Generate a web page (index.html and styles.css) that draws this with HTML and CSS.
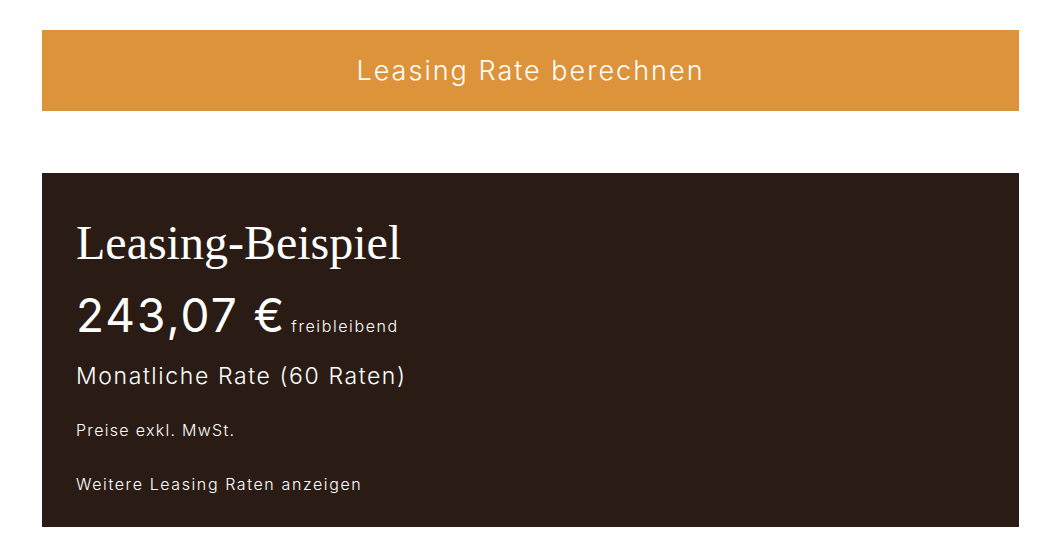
FILE: index.html
```html
<!DOCTYPE html>
<html lang="de">

<head>
    <meta charset="UTF-8">
    <meta name="viewport" content="width=device-width, initial-scale=1.0">
    <title>Leasing Rate</title>
    <link rel="stylesheet" href="styles.css">
</head>

<body>
    <div class="wrapper">
        <button class="btn">Leasing Rate berechnen</button>

        <div class="leasingBox">
            <h2 class="title">Leasing-Beispiel</h2>
            <div class="price">243,07 €<span class="note">freibleibend</span></div>
            <div class="rate">Monatliche Rate (60 Raten)</div>
            <p class="small">Preise exkl. MwSt.</p>
            <a class="small link" href="#">Weitere Leasing Raten anzeigen</a>
        </div>
    </div>
</body>

</html>
```

FILE: styles.css
```css
body {
    margin: 0;
    background-color: #ffffff;
    font-family: Inter, "Liberation Sans", sans-serif;
}

.wrapper {
    padding: 30px 43px 0 42px;
}

.btn {
    display: block;
    width: 100%;
    height: 81px;
    background-color: #dd9339;
    color: #ffffff;
    border: none;
    font-family: Inter, "Liberation Sans", sans-serif;
    font-weight: 300;
    font-size: 27px;
    letter-spacing: 2px;
    cursor: pointer;
}

.leasingBox {
    margin-top: 62px;
    height: 354px;
    box-sizing: border-box;
    background-color: #2a1c14;
    color: #ffffff;
    padding: 40px 34px;
}

.title {
    margin: 0;
    font-family: "Liberation Serif", serif;
    font-weight: 400;
    font-size: 48px;
    line-height: 60px;
}

.price {
    margin-top: 14px;
    font-size: 46px;
    font-weight: 400;
    letter-spacing: 2px;
    line-height: 56px;
}

.note {
    margin-left: 5px;
    font-size: 16px;
    font-weight: 300;
    letter-spacing: 1.6px;
}

.rate {
    margin-top: 6px;
    font-size: 23px;
    font-weight: 300;
    letter-spacing: 1.6px;
    line-height: 32px;
}

.small {
    display: block;
    margin: 26px 0 0;
    font-size: 16px;
    font-weight: 300;
    letter-spacing: 1.3px;
    line-height: 24px;
    color: #ffffff;
    text-decoration: none;
}

.link {
    margin-top: 30px;
    letter-spacing: 1.6px;
}
```
